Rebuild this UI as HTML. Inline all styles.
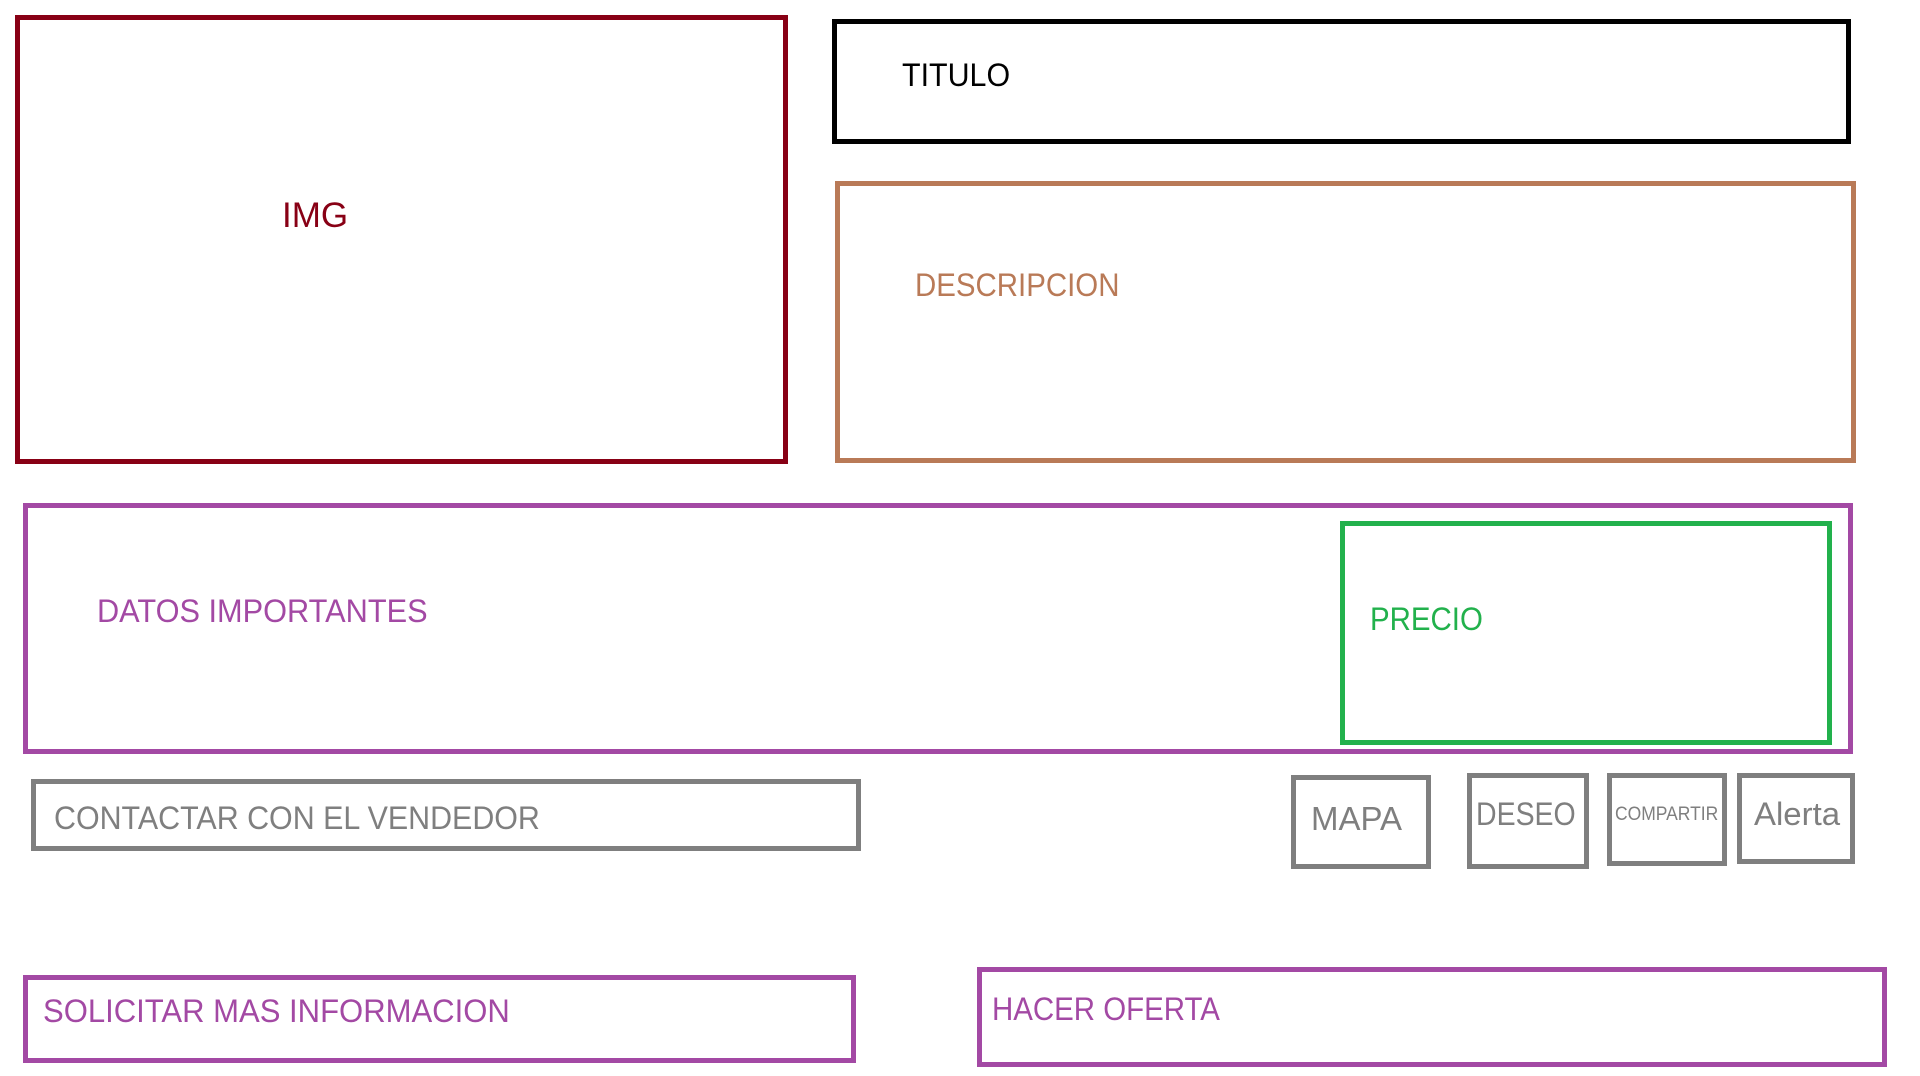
<!DOCTYPE html>
<html><head><meta charset="utf-8"><style>
html,body{margin:0;padding:0;background:#fff;}
body{width:1920px;height:1076px;position:relative;overflow:hidden;font-family:"Liberation Sans",sans-serif;}
.b{position:absolute;box-sizing:border-box;border:5px solid;}
.t{position:absolute;font-size:32px;line-height:32px;white-space:nowrap;transform:scaleX(0.92);transform-origin:left top;}
</style></head><body>
<div class="b" style="left:15px;top:15px;width:773px;height:449px;border-color:#880015;"></div>
<div class="t" style="left:282px;top:198px;color:#880015;font-size:35px;line-height:35px;transform:none;">IMG</div>

<div class="b" style="left:832px;top:19px;width:1019px;height:125px;border-color:#000;border-width:5px;"></div>
<div class="t" style="left:902px;top:59px;color:#000;transform:scaleX(0.95);">TITULO</div>

<div class="b" style="left:835px;top:181px;width:1021px;height:282px;border-color:#b97a57;"></div>
<div class="t" style="left:915px;top:269px;color:#b97a57;">DESCRIPCION</div>

<div class="b" style="left:23px;top:503px;width:1830px;height:251px;border-color:#a349a4;"></div>
<div class="t" style="left:97px;top:595px;color:#a349a4;transform:scaleX(0.96);">DATOS IMPORTANTES</div>

<div class="b" style="left:1340px;top:521px;width:492px;height:224px;border-color:#22b14c;"></div>
<div class="t" style="left:1370px;top:603px;color:#22b14c;">PRECIO</div>

<div class="b" style="left:31px;top:779px;width:830px;height:72px;border-color:#7f7f7f;"></div>
<div class="t" style="left:54px;top:802px;color:#7f7f7f;transform:scaleX(0.95);">CONTACTAR CON EL VENDEDOR</div>

<div class="b" style="left:1291px;top:775px;width:140px;height:94px;border-color:#7f7f7f;"></div>
<div class="t" style="left:1311px;top:802px;color:#7f7f7f;font-size:33px;line-height:33px;transform:scaleX(1.0);">MAPA</div>

<div class="b" style="left:1467px;top:773px;width:122px;height:96px;border-color:#7f7f7f;"></div>
<div class="t" style="left:1476px;top:798px;color:#7f7f7f;transform:scaleX(0.89);">DESEO</div>

<div class="b" style="left:1607px;top:773px;width:120px;height:93px;border-color:#7f7f7f;"></div>
<div class="t" style="left:1615px;top:805px;color:#7f7f7f;font-size:19px;line-height:19px;transform:scaleX(0.92);">COMPARTIR</div>

<div class="b" style="left:1737px;top:773px;width:118px;height:91px;border-color:#7f7f7f;"></div>
<div class="t" style="left:1754px;top:798px;color:#7f7f7f;transform:scaleX(1.03);">Alerta</div>

<div class="b" style="left:23px;top:975px;width:833px;height:88px;border-color:#a349a4;"></div>
<div class="t" style="left:43px;top:995px;color:#a349a4;transform:scaleX(0.97);">SOLICITAR MAS INFORMACION</div>

<div class="b" style="left:977px;top:967px;width:910px;height:100px;border-color:#a349a4;"></div>
<div class="t" style="left:992px;top:993px;color:#a349a4;">HACER OFERTA</div>
</body></html>
